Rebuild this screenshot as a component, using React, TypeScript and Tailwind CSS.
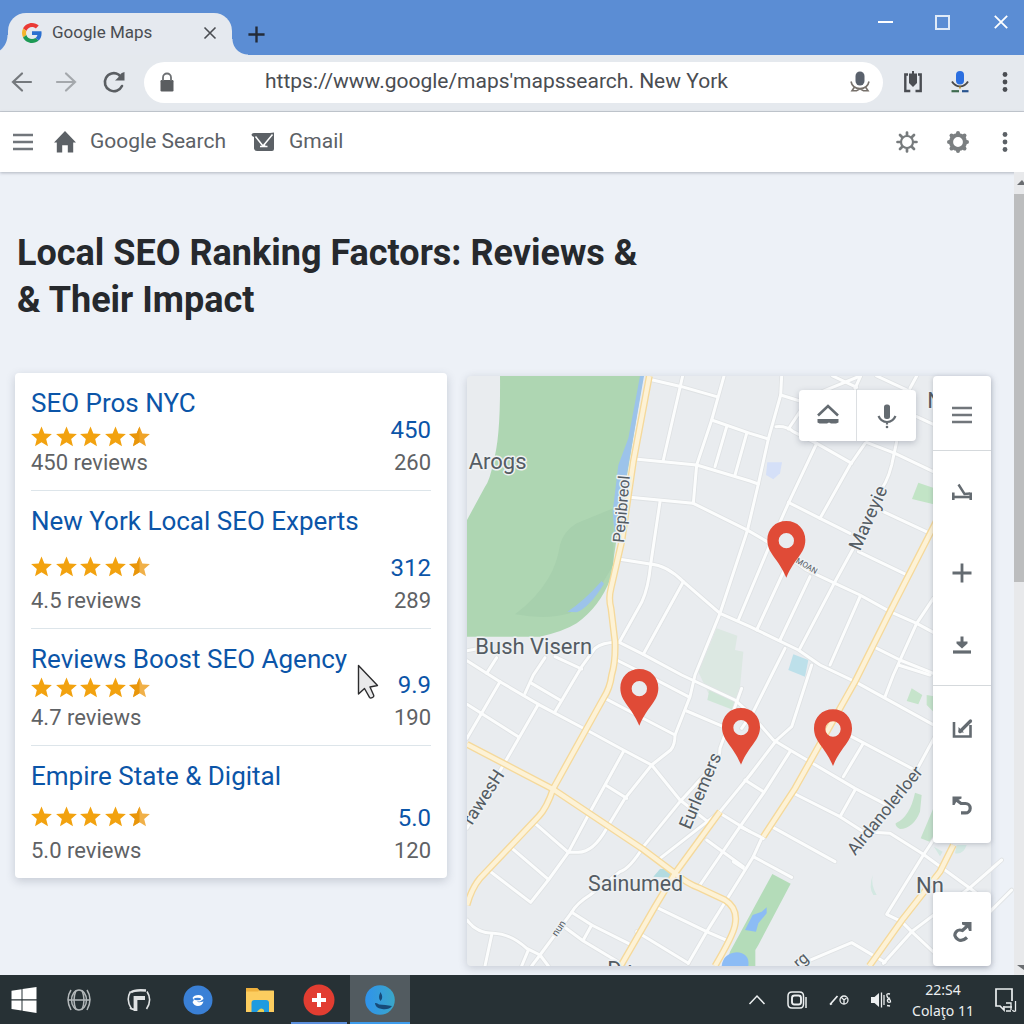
import React from "react";

type IconProps = { className?: string };

/* ---------- browser chrome icons ---------- */

const GoogleLogo = () => (
  <svg viewBox="0 0 48 48" className="size-5" aria-hidden="true">
    <path fill="#ea3a35" d="M24 9.5c3.5 0 6.7 1.2 9.2 3.6l6.9-6.9C35.9 2.4 30.5 0 24 0 14.600 0 6.500 5.400 2.600 13.200l8 6.200C12.400 13.700 17.700 9.500 24 9.500z" />
    <path fill="#f4b42c" d="M10.500 28.600c-.5-1.500-.8-3-.8-4.600s.3-3.100.8-4.600l-8-6.200C.900 16.500 0 20.100 0 24s.9 7.500 2.600 10.800l7.900-6.200z" />
    <path fill="#1d9a55" d="M24 48c6.500 0 11.900-2.100 15.900-5.800l-7.700-6c-2.200 1.400-4.900 2.300-8.200 2.300-6.300 0-11.600-4.200-13.500-9.900l-8 6.200C6.500 42.600 14.600 48 24 48z" />
    <path fill="#2a6fd0" d="M47 24.500c0-1.600-.2-3.100-.4-4.500H24v9h12.900c-.6 3-2.300 5.500-4.700 7.200l7.700 6C44.400 38 47 31.800 47 24.500z" />
  </svg>
);

const Close = ({ className = "size-4" }: IconProps) => (
  <svg viewBox="0 0 16 16" className={className} fill="none" stroke="currentColor" strokeWidth="1.6" aria-hidden="true">
    <path d="M2.500 2.500l11 11M13.500 2.500l-11 11" />
  </svg>
);

const Plus = ({ className = "size-5" }: IconProps) => (
  <svg viewBox="0 0 20 20" className={className} fill="none" stroke="currentColor" strokeWidth="2.800" aria-hidden="true">
    <path d="M10 0.500v19M0.500 10h19" />
  </svg>
);

const Arrow = ({ className = "" }: IconProps) => (
  <svg viewBox="0 0 24 24" className={"size-6 " + className} fill="none" stroke="currentColor" strokeWidth="2.200" strokeLinecap="round" aria-hidden="true">
    <path d="M21 12H3M12 3.500L3 12l9 8.500" />
  </svg>
);

const Reload = () => (
  <svg viewBox="0 0 24 24" className="size-6" fill="none" stroke="currentColor" strokeWidth="2.600" strokeLinecap="round" aria-hidden="true">
    <path d="M20 16A9 9 0 1 1 16.500 4.500L18.500 6.500" />
    <path d="M22.500 2v8.500h-9.500c2-2 3.500-3 5-5.500 1-2 2.500-2.500 4.500-3z" fill="currentColor" stroke="none" />
  </svg>
);

const Lock = () => (
  <svg viewBox="0 0 14 20" className="h-5 w-3.5" aria-hidden="true">
    <rect x="0.500" y="8" width="13" height="11.500" rx="1.200" fill="#5a5d60" />
    <path d="M3 9V5.500a4 4 0 0 1 8 0V9" fill="none" stroke="#6c6f72" strokeWidth="1.800" />
  </svg>
);

const UrlMic = () => (
  <svg viewBox="0 0 22 24" className="h-6 w-[22px]" fill="none" stroke="currentColor" aria-hidden="true">
    <rect x="6.500" y="1.500" width="9" height="14" rx="4.500" fill="#5a616c" stroke="none" />
    <path d="M2 11.500c1 5 4.500 7 9 7s8-2 9-7M5.500 17L3 20.800h4.500L11 18.800l3.500 2H19L16.500 17" stroke="#77716b" strokeWidth="1.600" />
  </svg>
);

const Extension = () => (
  <svg viewBox="0 0 20 24" className="h-6 w-5" fill="none" stroke="currentColor" strokeWidth="2.400" aria-hidden="true">
    <path d="M5 4.500H2.300v16.500h5M15 4.500h2.700v16.500h-5.200" />
    <path d="M9 1h2v2.500h3V13L10 17l-4-4V3.500h3z" fill="currentColor" stroke="none" />
  </svg>
);

const BlueMic = () => (
  <svg viewBox="0 0 20 24" className="h-6 w-5" fill="none" aria-hidden="true">
    <rect x="6" y="1" width="8" height="13.500" rx="4" fill="#2b6fe0" />
    <path d="M2 11.500c4 6.500 12 6.500 16 0" stroke="#4a4a4a" strokeWidth="1.900" />
    <path d="M10 16.500v2" stroke="#b89437" strokeWidth="1.800" />
    <path d="M1.500 21.200h7.500" stroke="#3f6b4f" strokeWidth="2.200" />
    <path d="M12 21.200h6.500" stroke="#28548f" strokeWidth="2.200" />
  </svg>
);

const Dots = ({ className = "" }: IconProps) => (
  <svg viewBox="0 0 6 22" className={"h-[22px] w-1.5 " + className} fill="currentColor" aria-hidden="true">
    <circle cx="3" cy="3.500" r="2.400" />
    <circle cx="3" cy="11" r="2.400" />
    <circle cx="3" cy="18.500" r="2.400" />
  </svg>
);

const Menu = () => (
  <svg viewBox="0 0 20 18" className="h-[18px] w-5" stroke="#71767b" strokeWidth="2.600" aria-hidden="true">
    <path d="M0 2h20M0 9h20M0 16h20" />
  </svg>
);

const Home = () => (
  <svg viewBox="0 0 22 22" className="size-[22px]" fill="currentColor" aria-hidden="true">
    <path d="M11 0L22 11.500h-2.800V21.500h-5.400v-7.300H8.200v7.300H2.800V11.500H0z" />
  </svg>
);

const MailBadge = () => (
  <svg viewBox="0 0 24 20" className="h-5 w-6" aria-hidden="true">
    <path d="M0.500 2.500Q1 .500 4 1h15l4-.5v16.500q0 2-2 2H6q-2.500 0-3-2.500V5L1 4z" fill="currentColor" />
    <path d="M4.500 4.500l7.500 9.500L21.500 2.500M9 14.500h7.500M13.500 14.500v-3" fill="none" stroke="#fff" strokeWidth="1.500" />
  </svg>
);

const SunGear = () => (
  <svg viewBox="0 0 24 24" className="size-6" fill="none" stroke="#777b7d" strokeLinecap="round" aria-hidden="true">
    <circle cx="12" cy="12" r="6" strokeWidth="2.200" />
    <path d="M12 2.500v3M12 18.500v3M2.500 12h3M18.500 12h3M5 5l2 2M17 17l2 2M19 5l-2 2M7 17l-2 2" strokeWidth="2.700" />
  </svg>
);

const SolidGear = () => (
  <svg viewBox="0 0 24 24" className="size-6" fill="none" stroke="#7b7f81" aria-hidden="true">
    <circle cx="12" cy="12" r="7" strokeWidth="4.200" />
    <path d="M12 3v1M12 20v1M3 12h1M20 12h1M5.500 5.500l1 1M17.500 17.500l1 1M18.500 5.500l-1 1M6.500 17.500l-1 1" strokeWidth="4" strokeLinecap="round" />
  </svg>
);

/* ---------- review list ---------- */

const STAR = "M12 1.500l3 7.300 7.900.6-6 5.100 1.900 7.700L12 18l-6.800 4.200 1.900-7.700-6-5.100 7.900-.6z";

function Stars({ half }: { half: string }) {
  return (
    <div className="flex w-[119px] justify-between" role="img" aria-label="4.5 out of 5 stars">
      {[0, 1, 2, 3].map((i) => (
        <svg key={i} viewBox="1 1 22 22" className="size-[21px]">
          <path d={STAR} fill="#f2a20f" />
        </svg>
      ))}
      <svg viewBox="1 1 22 22" className="size-[21px]">
        <path d={STAR} fill={half} />
        <path d="M12 1.500V18l-6.800 4.200 1.900-7.700-6-5.100 7.900-.6z" fill="#e9960a" />
      </svg>
    </div>
  );
}

const results = [
  { name: "SEO Pros NYC", reviews: "450 reviews", score: "450", count: "260", row: "h-7", half: "#efa42a" },
  { name: "New York Local SEO Experts", reviews: "4.5 reviews", score: "312", count: "289", row: "h-12 pb-2", half: "#f0b048" },
  { name: "Reviews Boost SEO Agency", reviews: "4.7 reviews", score: "9.9", count: "190", row: "h-[27px] pb-1", half: "#f0b048" },
  { name: "Empire State & Digital", reviews: "5.0 reviews", score: "5.0", count: "120", row: "h-[43px] pb-2", half: "#f0b048" },
];

function ResultsCard() {
  return (
    <section className="relative rounded bg-white px-4 font-[Roboto,sans-serif] shadow-[0_3px_10px_rgba(60,70,90,0.22)]">
      <ul className="divide-y divide-[#dde5ea]">
        {results.map((r) => (
          <li key={r.name} className="flex items-end justify-between pt-3.5 pb-[11px]">
            <div>
              <a href="#" className="block text-[26px] leading-8 whitespace-nowrap text-[#0b55a8]">{r.name}</a>
              <div className={"flex items-end " + r.row}>
                <Stars half={r.half} />
              </div>
              <p className="text-[22px] leading-8 text-[#5f6265]">{r.reviews}</p>
            </div>
            <div className="text-right">
              <p className="text-2xl leading-[34px] text-[#0b55a8]">{r.score}</p>
              <p className="text-[22px] leading-8 text-[#5f6265]">{r.count}</p>
            </div>
          </li>
        ))}
      </ul>
      <svg viewBox="0 0 22 36" className="absolute top-[291px] left-[342px] h-9 w-[22px]" aria-hidden="true">
        <path d="M1.500 1.500v28.500l6-5.500 5 8.800c1 1.400 4.800.2 4.300-1.800L13 23l7.500-1.500z" fill="#e9e9ea" stroke="#2c2c2e" strokeWidth="1.400" strokeLinejoin="round" />
      </svg>
    </section>
  );
}

/* ---------- map ---------- */

const streets = [
  "M565 42L665 65L770 95",
  "M668 33L610 285",
  "M792 33L755 165L710 300L700 415",
  "M755 165L870 205L925 222",
  "M800 185L765 305",
  "M860 205L825 330",
  "M525 282L710 300L870 348L895 357",
  "M510 397L700 415L865 497L925 532L1040 615L1125 655L1200 690L1290 740L1370 775L1420 802",
  "M600 410L572 598Q565 670 545 712L478 832",
  "M480 583L570 597Q620 600 670 650L780 745L870 785L1015 855L1080 900L1185 950L1430 1085",
  "M670 650L550 868",
  "M965 33L962 90L925 222L895 357L862 497L780 745L705 930L690 995L645 1110Q645 1140 632 1155L575 1200L495 1300L440 1390Q400 1462 355 1462L325 1462L265 1545L212 1612L85 1515",
  "M1070 235L985 415L925 550L835 765",
  "M478 832L550 868L665 930L825 1005L870 1045L940 1125L990 1155L1185 1270L1290 1325",
  "M478 832Q430 830 405 850L365 905L285 1040",
  "M21 887L120 950L235 1018L380 1095L490 1155L575 1200L660 1305L750 1375",
  "M110 878L80 925", "M255 878L220 930L195 985", "M285 875L365 912", "M21 857L60 850", "M470 885L580 940L685 995",
  "M120 950L21 1120", "M21 1018L175 1115", "M235 1018L130 1200L21 1390", "M215 955L300 1005",
  "M435 1000L530 1050L645 1110", "M680 1038L790 1085",
  "M490 1160L435 1260L385 1350L325 1462", "M440 1262L500 1300", "M225 1375L325 1462", "M150 1445L265 1543",
  "M845 970L780 1150Q780 1180 760 1200L660 1310L550 1445Q510 1510 480 1520L390 1590Q350 1615 335 1642L240 1770L215 1803",
  "M1055 900L995 1085L950 1125L870 1230L780 1340L600 1480",
  "M740 1425L850 1505", "M780 1345L870 1400", "M990 1160L910 1285L840 1385L720 1560",
  "M962 90L1020 108", "M948 185Q980 182 1000 200L1070 235L1175 295", "M985 192L1050 95L1200 33",
  "M1118 33L1190 67", "M1202 33L1185 70", "M1250 33L1330 70L1350 80", "M1370 33L1350 70", "M1370 155L1420 178",
  "M1215 235L1170 300L1080 460", "M1220 232L1305 265L1420 320",
  "M1310 230L1295 300Q1280 360 1250 390L1180 550L1125 650L1020 850",
  "M985 412L1080 460L1170 505", "M1270 440L1410 505", "M1195 560L1345 632",
  "M980 600L890 795", "M1050 635L960 825", "M1200 695L1110 900",
  "M1420 700L1370 775L1300 930L1275 995", "M1240 845L1320 885L1420 925",
  "M975 850L935 930L880 1040L845 1090",
  "M855 1245L910 1280", "M840 1385L910 1420", "M905 1420L880 1475L840 1540L740 1700L685 1795", "M820 1490L850 1510",
  "M880 1475L995 1537", "M935 1385L1125 1490", "M1005 1287L1140 1355L1210 1400L1290 1405L1390 1468L1530 1570L1570 1600",
  "M1210 1135L1150 1235", "M1185 1275L1140 1355", "M1175 1115L1355 1210", "M1370 1215L1430 1105",
  "M1430 1410L1390 1470L1280 1648L1325 1670L1355 1700L1430 1770", "M1355 1700L1270 1795",
  "M1010 1803L1040 1790L1175 1733L1275 1792", "M1315 900L1410 930",
  "M1355 1700L1530 1568L1625 1485", "M1655 1575L1590 1640",
  "M585 1625L740 1700L805 1728", "M530 1700L685 1795", "M335 1642L395 1680L505 1735", "M395 1680L370 1725", "M305 1680L370 1728L490 1800",
  "M21 1665Q50 1705 100 1705Q150 1705 200 1750L240 1770L265 1803", "M95 1710L75 1803", "M205 1755L185 1803",
];

const avenues = [
  "M568 33L520 290L485 530L453 670Q445 700 453 730L465 830Q467 890 455 930Q450 970 430 1000L380 1090L280 1270Q260 1330 235 1355L150 1445L60 1540Q35 1570 21 1620",
  "M21 1138L280 1273L545 1450L645 1525Q680 1555 720 1570L795 1605Q835 1630 825 1680Q820 1710 765 1803",
  "M780 1340L645 1525L585 1625L482 1803",
  "M1430 467L1290 740L1185 950L1005 1270L910 1415",
  "M1480 1440L1440 1520L1330 1660L1228 1803",
];

const pins = [
  { x: 979, y: 470 },
  { x: 538, y: 914 },
  { x: 843, y: 1031 },
  { x: 1119, y: 1035 },
];

const labels = [
  { t: "Arogs", x: 26, y: 311, size: 66, r: 0 },
  { t: "Bush Visern", x: 46, y: 868, size: 66, r: 0 },
  { t: "Sainumed", x: 384, y: 1578, size: 64, r: 0 },
  { t: "Nn", x: 1368, y: 1583, size: 66, r: 0 },
  { t: "N", x: 1402, y: 130, size: 66, r: 0 },
  { t: "Pepibreol", x: 492, y: 534, size: 48, r: -85 },
  { t: "Maveyie", x: 1200, y: 560, size: 56, r: -66 },
  { t: "MOAN", x: 1006, y: 592, size: 24, r: 30 },
  { t: "rawesH", x: 36, y: 1382, size: 54, r: -57 },
  { t: "Eurlemers", x: 690, y: 1396, size: 54, r: -67 },
  { t: "Alrdanolerloer", x: 1186, y: 1474, size: 52, r: -51 },
  { t: "nun", x: 290, y: 1716, size: 30, r: -55 },
  { t: "D :", x: 442, y: 1836, size: 66, r: 0 },
  { t: "rg", x: 1016, y: 1812, size: 48, r: -40 },
];

function MapDrawing() {
  return (
    <svg viewBox="21 33 1572 1770" className="absolute inset-0 size-full overflow-visible" role="img" aria-label="Street map">
      <clipPath id="map-frame">
        <rect x="21" y="33" width="1640" height="1770" />
      </clipPath>
      <g clipPath="url(#map-frame)">
        <path fill="#aed6b2" d="M120 33Q122 220 100 290Q90 345 75 365L21 465V815H240Q310 800 350 775Q420 725 452 640L470 520L550 33Z" />
        <path fill="#a7d0ad" d="M350 475Q310 500 300 540Q290 600 265 640Q230 700 165 748Q260 765 330 745L430 650L460 600V430Z" />
        <path fill="#9cc3ea" d="M540 33H552L500 330L465 520L458 440L475 300L505 220Z" />
        <path fill="#9cc3ea" d="M425 648L432 656Q390 725 350 742L322 740Q370 710 425 648Z" />
        <path fill="#dce8e2" d="M770 790L832 812L825 855L850 860L835 1020L745 985L715 920Z" />
        <path fill="#d0e6d8" d="M748 975L835 1010L820 1035L742 1005Z" />
        <path fill="#d5e0f8" d="M922 292L966 292L960 325L940 343L918 330Z" />
        <path fill="#bde0ea" d="M1000 868L1045 885L1035 935L985 915Z" />
        <path fill="#c2e4c6" d="M1375 353L1430 372V420L1356 402Z" />
        <path fill="#c6e4cb" d="M1355 970L1387 990L1375 1018L1340 1008ZM1400 990L1430 995V1050L1400 1020Z" />
        <path fill="#c4e1cb" d="M1365 1283L1385 1290L1380 1340Q1360 1390 1320 1392Q1305 1385 1307 1375Q1350 1355 1365 1283ZM1420 1330V1435L1382 1420Z" />
        <path fill="#d3e8e2" d="M1238 1530Q1225 1570 1240 1590L1250 1590Q1232 1560 1238 1530ZM1422 1445L1448 1460L1440 1474ZM1490 1440L1520 1440Q1510 1470 1485 1465Z" />
        <path fill="#b4dcb9" d="M937 1527L992 1556L895 1740L886 1755V1803H795L810 1760L870 1650Z" />
        <path fill="#b3dbe0" d="M600 1512H635L655 1540L580 1535Z" />
        <path fill="#8cbcf5" d="M878 1650L905 1640L920 1627V1645L895 1675L888 1700L855 1695ZM785 1803Q790 1765 830 1762Q870 1765 865 1803Z" />
        <g fill="none" strokeLinejoin="round" strokeLinecap="round">
          <g stroke="#dfe2e4" strokeWidth="14">{streets.map((d) => <path key={d} d={d} />)}</g>
          <g stroke="#fcfdfd" strokeWidth="9">{streets.map((d) => <path key={d} d={d} />)}</g>
          <g stroke="#f5d99b" strokeWidth="21" strokeLinecap="butt">{avenues.map((d) => <path key={d} d={d} />)}</g>
          <g stroke="#fdf2d6" strokeWidth="13" strokeLinecap="butt">{avenues.map((d) => <path key={d} d={d} />)}</g>
        </g>
        <g className="font-[Roboto,sans-serif]" fill="#545c63" stroke="#eef1f3" strokeWidth="9" strokeLinejoin="round" paintOrder="stroke">
          {labels.map((l) => (
            <text key={l.t} x={l.x} y={l.y} fontSize={l.size} transform={`rotate(${l.r} ${l.x} ${l.y})`}>{l.t}</text>
          ))}
        </g>
        {pins.map((p) => (
          <path key={p.x} transform={`translate(${p.x} ${p.y})`} fill="#e04b37" fillRule="evenodd" d="M0-2C-33-2-57 22-57 55C-57 96-24 110 0 168C24 110 57 96 57 55C57 22 33-2 0-2ZM0 34A23 23 0 1 1 0 80A23 23 0 1 1 0 34Z" />
        ))}
      </g>
    </svg>
  );
}

const HomeTray = () => (
  <svg viewBox="0 0 24 24" className="size-6" fill="none" stroke="currentColor" strokeWidth="2.600" aria-hidden="true">
    <path d="M2 13.500L12 4l10 9.500" />
    <path d="M1.500 17h21v3.500L20 21.500h-5l-2-1-2 1H3.500l-2-1z" fill="currentColor" stroke="none" />
  </svg>
);
const MapMic = () => (
  <svg viewBox="0 0 24 26" className="h-[26px] w-6" fill="none" stroke="currentColor" strokeWidth="2.200" aria-hidden="true">
    <rect x="9" y="1.500" width="6" height="14.500" rx="2.500" fill="currentColor" stroke="none" />
    <path d="M3.500 13c3.500 8 13.500 8 17 0M12 19v2.500" />
    <circle cx="12" cy="24" r="1.300" fill="currentColor" stroke="none" />
  </svg>
);
const Bench = () => (
  <svg viewBox="0 0 24 24" className="size-6" fill="none" stroke="currentColor" aria-hidden="true">
    <path d="M3.300 13.500v7.500M20.700 13.500v7.500" strokeWidth="2.600" />
    <path d="M3.500 18h17" strokeWidth="2.600" />
    <path d="M8.500 5.500l6 9.500 5.500-.5" strokeWidth="2.400" />
  </svg>
);
const Download = () => (
  <svg viewBox="0 0 24 24" className="size-6" fill="none" stroke="currentColor" aria-hidden="true">
    <path d="M12 3.500v6" strokeWidth="3" />
    <path d="M6.500 8.500h11v2L12 15.500l-5.500-5z" fill="currentColor" stroke="none" />
    <path d="M3 19h18" strokeWidth="3.200" />
  </svg>
);
const EditBox = () => (
  <svg viewBox="0 0 24 24" className="size-6" fill="none" stroke="currentColor" aria-hidden="true">
    <path d="M4 6v14.500h16.500V9" strokeWidth="2.600" />
    <path d="M20.500 5L10 15.500" strokeWidth="3.200" strokeLinecap="round" />
    <path d="M8.500 11v5.500h5.500z" fill="currentColor" stroke="none" />
  </svg>
);
const Undo = () => (
  <svg viewBox="0 0 24 24" className="size-6" fill="none" stroke="currentColor" strokeWidth="3.200" aria-hidden="true">
    <path d="M2.500 3.500h9v2l-4.500 2-2.500 4.500h-2z" fill="currentColor" stroke="none" />
    <path d="M5 6l6 4.500h4.500a4.700 4.700 0 0 1 0 9.400H11" />
  </svg>
);
const Share = () => (
  <svg viewBox="0 0 24 24" className="size-6" fill="none" stroke="currentColor" strokeWidth="3.200" aria-hidden="true">
    <path d="M17 18.500Q12 23 8 20.500Q3 17 6 13Q8 10 12.500 11.500L19 5.500" />
    <path d="M12 3h9.500v9h-2.500l-1.500-4.500-5.500-2z" fill="currentColor" stroke="none" />
  </svg>
);

function MapPanel() {
  return (
    <section className="relative mt-[3px] aspect-[524/590] rounded bg-[#e9ecef] font-[Roboto,sans-serif] text-[#646b71] shadow-[0_2px_8px_rgba(60,70,90,0.22)]">
      <MapDrawing />
      <div className="absolute top-3.5 right-[75px] flex divide-x divide-[#dcdfe2] rounded-sm bg-white shadow-[0_2px_6px_rgba(60,70,90,0.28)]">
        <button aria-label="Layers" className="grid h-[51px] w-[58px] place-items-center pb-1"><HomeTray /></button>
        <button aria-label="Voice search" className="grid h-[51px] w-[59px] place-items-center"><MapMic /></button>
      </div>
      <div className="absolute top-0 right-0 w-[58px] divide-y divide-[#d5d9dc] rounded-sm bg-white shadow-[0_1px_5px_rgba(60,70,90,0.28)]">
        <button aria-label="Menu" className="grid h-[75px] w-full place-items-center pt-1"><Menu /></button>
        <div className="flex flex-col">
          <button aria-label="Terrain" className="grid h-20 w-full place-items-center"><Bench /></button>
          <button aria-label="Zoom in" className="grid h-20 w-full place-items-center pt-1"><Plus /></button>
          <button aria-label="Download" className="grid h-[74px] w-full place-items-center pb-1.5"><Download /></button>
        </div>
        <div className="flex flex-col">
          <button aria-label="Edit" className="grid h-20 w-full place-items-center pt-1"><EditBox /></button>
          <button aria-label="Undo" className="grid h-[77px] w-full place-items-center"><Undo /></button>
        </div>
      </div>
      <button aria-label="Share" className="absolute right-0 bottom-0 grid h-[74px] w-[58px] place-items-center rounded-sm bg-white pt-1 shadow-[0_1px_5px_rgba(60,70,90,0.28)]"><Share /></button>
    </section>
  );
}

/* ---------- taskbar ---------- */

const WindowsLogo = () => (
  <svg viewBox="0 0 26 26" className="size-[26px]" fill="#fff" aria-hidden="true">
    <path d="M.500 3.700L10.500 2.300V12.300H.500zM11.500 2.100L25.500 0V12.300H11.500zM.500 13.500H10.500V23.400L.500 22zM11.500 13.500H25.500V26L11.500 23.700z" />
  </svg>
);
const Globe = () => (
  <svg viewBox="0 0 26 26" className="size-[26px]" fill="none" stroke="#b3b8ba" strokeWidth="1.500" aria-hidden="true">
    <ellipse cx="13" cy="13" rx="7.500" ry="10" />
    <path d="M10 3.500q-4 9.500 0 19M16 3.500q4 9.500 0 19" />
    <path d="M1.500 13h23M5 3Q-1 12 5 23M21 3q6 9 0 20" />
  </svg>
);
const RoundF = () => (
  <svg viewBox="0 0 26 26" className="size-[26px]" fill="none" stroke="#dfe2e3" aria-hidden="true">
    <path d="M4.500 4.500Q-.500 13 5.500 22M21 4.500Q26.500 13 20.500 22" strokeWidth="1.600" />
    <path d="M5 5.500Q8 2.500 20 3.500" strokeWidth="2.400" />
    <path d="M19 11H9.500V24" strokeWidth="3.800" />
    <path d="M4 21q3 2 6 1.500" strokeWidth="2" />
  </svg>
);
const BlueE = () => (
  <svg viewBox="0 0 30 30" className="size-[30px]" aria-hidden="true">
    <circle cx="15" cy="15" r="14.500" fill="#3a80d6" />
    <path d="M9.500 13Q11 10 15.500 10Q20 10 20.500 14L17 16.500H14Q15 18 20.500 16.500Q19 21 15 21Q11 21 9.500 17Q12 15 9.500 13Z" fill="#fff" />
    <ellipse cx="14.500" cy="14" rx="3.500" ry="1.200" fill="#3a80d6" />
  </svg>
);
const Folder = () => (
  <svg viewBox="0 0 30 26" className="h-[26px] w-[30px]" aria-hidden="true">
    <path d="M1 1.500Q1 1 2 1H12L14.500 3.500H28.500Q29 3.500 29 4.500V25H1z" fill="#fccd5f" />
    <path d="M1 4.500H13L14.500 3.500L12 1H2Q1 1 1 2z" fill="#eeb03c" />
    <path d="M6.500 25V16Q6.500 13 9.500 13H21Q24 13 24 16V25z" fill="#1f9be0" />
    <path d="M12 25q4-6 7-2v2z" fill="#e9cf55" />
  </svg>
);
const RedPlus = () => (
  <svg viewBox="0 0 32 32" className="size-8" aria-hidden="true">
    <circle cx="16" cy="16" r="15.500" fill="#e23d31" />
    <path d="M16 9v14M9 16h14" stroke="#fff" strokeWidth="4" />
  </svg>
);
const Swirl = () => (
  <svg viewBox="0 0 30 30" className="size-[30px]" aria-hidden="true">
    <defs>
      <linearGradient id="swirl" x1="0" x2="1"><stop offset="0" stopColor="#2f93ec" /><stop offset="1" stopColor="#3aa6c8" /></linearGradient>
    </defs>
    <circle cx="15" cy="15" r="14.800" fill="url(#swirl)" />
    <path d="M15.500 7Q19 13 15.500 16Q12.500 13 15.500 7zM10 18Q12 17.500 14 19.500Q20 19.500 27 21Q24 25 17 24Q10 23 10 18z" fill="#174a78" />
  </svg>
);

const apps = [
  { label: "Start", icon: <WindowsLogo />, cls: "w-[48px]" },
  { label: "Web", icon: <Globe />, cls: "w-[62px]" },
  { label: "Notes", icon: <RoundF />, cls: "w-[57px]" },
  { label: "Browser", icon: <BlueE />, cls: "w-[62px]" },
  { label: "Files", icon: <Folder />, cls: "w-[62px]" },
  { label: "Health", icon: <RedPlus />, cls: "w-[56px] border-b-2 border-[#5b8fdc] pt-0.5" },
  { label: "Active app", icon: <Swirl />, cls: "ml-[3px] w-[60px] border-b-2 border-[#3d9cec] bg-[#525b60] pt-0.5" },
];

function Taskbar() {
  return (
    <footer className="flex h-[49px] items-stretch justify-between bg-[#273135] font-['Noto_Sans',sans-serif] text-[#eceff0]">
      <nav className="flex">
        {apps.map((a) => (
          <button key={a.label} aria-label={a.label} className={"grid h-full place-items-center " + a.cls}>{a.icon}</button>
        ))}
      </nav>
      <div className="flex items-center pr-1.5">
        <button aria-label="Show hidden icons" className="mr-5">
          <svg viewBox="0 0 18 12" className="h-3 w-[18px]" fill="none" stroke="currentColor" strokeWidth="1.500"><path d="M1.500 10L9 2l7.500 8" /></svg>
        </button>
        <button aria-label="Camera" className="mr-5">
          <svg viewBox="0 0 22 20" className="h-5 w-[22px]" fill="none" stroke="currentColor" strokeWidth="1.500">
            <rect x="6" y="5.500" width="9" height="9" rx="2.500" strokeWidth="1.900" />
            <path d="M17.500 14V6q0-4-4-4H6Q2 2 2 6v8q0 4 4 4h8q3.500 0 3.500-4M20 7v11" />
          </svg>
        </button>
        <button aria-label="Network" className="mr-5">
          <svg viewBox="0 0 22 16" className="h-4 w-[22px]" fill="none" stroke="currentColor" strokeWidth="1.300">
            <path d="M2 12.500L9.500 4M2 12.500l2-1" strokeWidth="1.700" /><circle cx="16" cy="8" r="4" /><path d="M13 5l3 3 2.500-2M16 8v4" />
          </svg>
        </button>
        <button aria-label="Volume" className="mr-5">
          <svg viewBox="0 0 22 18" className="h-[18px] w-[22px]" fill="none" stroke="currentColor" strokeWidth="1.300">
            <path d="M1 6h3.500L9 2v14L4.500 12H1z" fill="currentColor" stroke="none" /><path d="M11.500 1.500v15M14 4v10M20 3q-4-1-3 2t3 2q-3 1-2.500 3t3 1q0-3-2-2.500M17 14.500l3 .5" />
          </svg>
        </button>
        <div className="mr-5 text-center text-sm leading-[21px]">
          <p>22:S4</p>
          <p>Colaţo 11</p>
        </div>
        <button aria-label="Notifications">
          <svg viewBox="0 0 24 28" className="h-7 w-6" fill="none" stroke="currentColor" strokeWidth="1.700">
            <path d="M10 20v4l-4-4H2V3h16v12" /><path d="M12 17h5v7M11 21h7M12 25h5M21.500 15v10q-2 1-3-1" strokeWidth="1.300" />
          </svg>
        </button>
      </div>
    </footer>
  );
}

/* ---------- page ---------- */

export default function App() {
  return (
    <div className="flex min-h-screen flex-col bg-[#edf1f7]">
      <header className="font-[Roboto,sans-serif] text-[#4a4d52]">
        <div className="flex h-[55px] items-end justify-between bg-[#5b8dd4]">
          <div className="flex items-end">
            <div className="h-5 w-2 bg-[radial-gradient(circle_at_0_0,transparent_19px,#e5e9ef_20px)] bg-[length:20px_20px] bg-right" />
            <div className="flex h-[42px] w-56 items-center rounded-t-[18px] bg-[#e5e9ef] px-3.5 pb-0.5">
              <GoogleLogo />
              <span className="ml-2.5 flex-1 text-[17px]">Google Maps</span>
              <button aria-label="Close tab"><Close /></button>
            </div>
            <div className="h-4 w-4 bg-[radial-gradient(circle_at_100%_0,transparent_15px,#e5e9ef_16px)]" />
            <button aria-label="New tab" className="mb-3 text-[#232b38]"><Plus className="size-[17px]" /></button>
          </div>
          <div className="mb-6 flex items-center gap-[42px] pr-3.5 text-white">
            <button aria-label="Minimize" className="h-0.5 w-[15px] bg-white" />
            <button aria-label="Maximize" className="size-[15px] border-2 border-[#dfeaf8]" />
            <button aria-label="Close window"><Close className="size-[18px]" /></button>
          </div>
        </div>
        <div className="flex h-[57px] items-center border-b border-[#c6cbd2] bg-[#e5e9ee] px-2.5 pb-0.5">
          <button aria-label="Back" className="text-[#75797d]"><Arrow /></button>
          <button aria-label="Forward" className="ml-5 text-[#a4a8ac]"><Arrow className="rotate-180" /></button>
          <button aria-label="Reload" className="ml-6 text-[#5a5e62]"><Reload /></button>
          <div className="ml-[18px] flex h-[41px] flex-1 items-center rounded-full bg-white px-4">
            <Lock />
            <input aria-label="Address" defaultValue="https://www.google/maps′mapssearch. New York" className="ml-[91px] min-w-0 flex-1 bg-transparent text-[21px] outline-none" />
            <button aria-label="Search by voice" className="-mr-1"><UrlMic /></button>
          </div>
          <button aria-label="Extensions" className="ml-5"><Extension /></button>
          <button aria-label="Dictate" className="ml-[27px]"><BlueMic /></button>
          <button aria-label="Browser menu" className="mr-1.5 ml-8"><Dots /></button>
        </div>
        <nav className="flex h-[60px] items-center bg-white pr-4 pl-[13px] text-[21px] text-[#5c6166] shadow-[0_1px_3px_rgba(60,70,90,0.35)]">
          <button aria-label="Menu"><Menu /></button>
          <a href="#" className="ml-[21px] flex items-center gap-3.5"><Home />Google Search</a>
          <a href="#" className="ml-[25px] flex items-center gap-3.5"><MailBadge />Gmail</a>
          <button aria-label="Theme" className="ml-auto"><SunGear /></button>
          <button aria-label="Settings" className="ml-[27px]"><SolidGear /></button>
          <button aria-label="More" className="ml-8"><Dots /></button>
        </nav>
      </header>

      <div className="flex flex-1">
        <main className="min-w-0 flex-1 pt-[58px] pr-[23px] pb-2 pl-[15px]">
          <h1 className="pl-0.5 font-[Roboto,sans-serif] text-4xl leading-[47px] font-bold text-[#26292d]">
            Local SEO Ranking Factors: Reviews &amp;<br />&amp; Their Impact
          </h1>
          <div className="mt-[49px] grid grid-cols-[432fr_524fr] items-start gap-5">
            <ResultsCard />
            <MapPanel />
          </div>
        </main>
        <aside aria-hidden="true" className="flex w-2.5 flex-col justify-between bg-[#e8e9eb] pt-2 pb-1 text-[#6a6d70]">
          <svg viewBox="0 0 10 6" className="h-1.5 w-2.5" fill="currentColor"><path d="M3 5l5-5 4 5z" /></svg>
          <div className="mt-2 mb-auto h-[49%] bg-[#bcbdbe]" />
          <svg viewBox="0 0 10 6" className="h-1.5 w-2.5" fill="currentColor"><path d="M3 0h7v5z" /></svg>
        </aside>
      </div>

      <Taskbar />
    </div>
  );
}
